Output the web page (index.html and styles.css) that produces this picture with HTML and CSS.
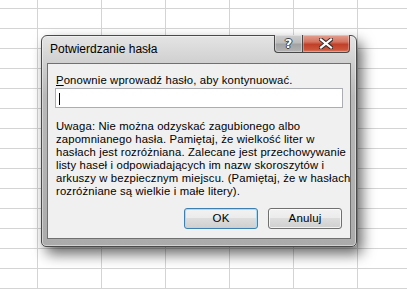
FILE: index.html
```html
<!DOCTYPE html>
<html lang="pl">
<head>
<meta charset="utf-8">
<title>Potwierdzanie hasła</title>
<link rel="stylesheet" href="styles.css">
</head>
<body>
<div class="sheet"></div>
<div class="dialog">
  <div class="titlebar">
    <span class="title">Potwierdzanie hasła</span>
    <div class="caption-buttons">
      <div class="cap help"><span>?</span></div>
      <div class="cap close">
        <svg width="14" height="11" viewBox="0 0 14 11">
          <path d="M2 1.5 L12 9.5 M12 1.5 L2 9.5" stroke="#3a2a28" stroke-width="4.2" stroke-linecap="square"/>
          <path d="M2 1.5 L12 9.5 M12 1.5 L2 9.5" stroke="#ffffff" stroke-width="2.2" stroke-linecap="square"/>
        </svg>
      </div>
    </div>
  </div>
  <div class="client">
    <div class="label"><u>P</u>onownie wprowadź hasło, aby kontynuować.</div>
    <div class="field"><span class="caret"></span></div>
    <p class="note">Uwaga: Nie można odzyskać zagubionego albo<br>zapomnianego hasła. Pamiętaj, że wielkość liter w<br>hasłach jest rozróżniana. Zalecane jest przechowywanie<br>listy haseł i odpowiadających im nazw skoroszytów i<br>arkuszy w bezpiecznym miejscu. (Pamiętaj, że w hasłach<br>rozróżniane są wielkie i małe litery).</p>
    <div class="buttons">
      <div class="btn default">OK</div>
      <div class="btn">Anuluj</div>
    </div>
  </div>
</div>
</body>
</html>
```
FILE: styles.css
```css
html, body {
  margin: 0;
  padding: 0;
}
body {
  width: 407px;
  height: 289px;
  overflow: hidden;
  background-color: #ffffff;
  font-family: "Liberation Sans", Arial, sans-serif;
  position: relative;
}
.sheet {
  width: 407px;
  height: 289px;
  background-image:
    linear-gradient(to right, #d4d4d4 1px, transparent 1px),
    linear-gradient(to bottom, #d4d4d4 1px, transparent 1px);
  background-size: 64px 100%, 100% 20px;
  background-position: 37px 0, 0 8px;
}
.dialog {
  position: absolute;
  left: 41px;
  top: 35px;
  width: 314px;
  height: 210px;
  border: 1px solid #4a4a4a;
  border-radius: 6px 6px 5px 5px;
  background: linear-gradient(to bottom, #e4e4e4 0, #d0d0d0 27px, #b9b9b9 60px, #ababab 100%);
  box-shadow: inset 0 0 0 1px rgba(255,255,255,0.45), 5px 7px 14px rgba(0,0,0,0.6);
  display: flex;
  flex-direction: column;
}
.titlebar {
  height: 27px;
  display: flex;
  align-items: center;
  padding-left: 8px;
  position: relative;
}
.title {
  font-size: 12px;
  color: #000;
  margin-top: -1px;
}
.caption-buttons {
  position: absolute;
  top: -1px;
  right: 6px;
  display: flex;
  height: 19px;
}
.cap {
  height: 17px;
  border: 1px solid #474747;
  border-top: none;
  display: flex;
  align-items: center;
  justify-content: center;
}
.help {
  width: 27px;
  border-radius: 0 0 0 4px;
  border-right: none;
  background: linear-gradient(to bottom, #cfcfcf 0, #bcbcbc 45%, #a2a2a2 55%, #b4b4b4 100%);
  box-shadow: inset 0 0 0 1px rgba(255,255,255,0.35);
}
.help span {
  font-family: "DejaVu Sans", sans-serif;
  font-weight: bold;
  font-size: 13px;
  color: #ffffff;
  text-shadow: 1px 0 0 #404040, -1px 0 0 #404040, 0 1px 0 #404040, 0 -1px 0 #404040;
  line-height: 1;
}
.close {
  width: 46px;
  border-radius: 0 0 4px 0;
  background: linear-gradient(to bottom, #e6a090 0, #d47562 40%, #c0402a 55%, #cc5438 85%, #de7c66 100%);
  box-shadow: inset 0 0 0 1px rgba(255,255,255,0.3);
}
.client {
  flex: 1;
  margin: 0 5px 7px 5px;
  border: 1px solid #707070;
  background: #f0f0f0;
  padding: 9px 7px 9px 7px;
  display: flex;
  flex-direction: column;
  font-size: 11.3px;
  letter-spacing: 0.15px;
  color: #000;
}
.label {
  line-height: 15px;
  padding-left: 1px;
}
.field {
  height: 18px;
  border: 1px solid #abadb3;
  background: #ffffff;
  position: relative;
}
.caret {
  position: absolute;
  left: 3px;
  top: 4px;
  width: 1px;
  height: 12px;
  background: #000;
}
.note {
  margin: 12px 0 0 0;
  padding-left: 1px;
  line-height: 13px;
  height: 78px;
  white-space: nowrap;
}
.buttons {
  margin-top: 10px;
  display: flex;
  justify-content: flex-end;
  gap: 10px;
  padding-right: 1px;
}
.btn {
  width: 72px;
  height: 19px;
  border: 1px solid #707070;
  border-radius: 3px;
  background: linear-gradient(to bottom, #f2f2f2 0, #ebebeb 50%, #dddddd 50%, #cfcfcf 100%);
  box-shadow: inset 0 0 0 1px rgba(255,255,255,0.7);
  display: flex;
  align-items: center;
  justify-content: center;
  line-height: 1;
  font-size: 11.5px;
}
.btn.default {
  border-color: #3c7fb1;
  box-shadow: inset 0 0 0 1px #a6dcf5;
}
```
